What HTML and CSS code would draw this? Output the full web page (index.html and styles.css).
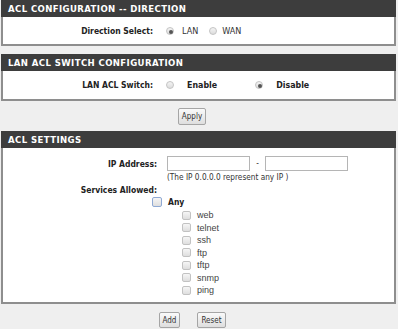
FILE: index.html
```html
<!DOCTYPE html>
<html>

<head>
    <meta charset="UTF-8">
    <title>ACL</title>
    <link rel="stylesheet" href="styles.css">
</head>

<body>
    <div class="panel">
        <div class="panel-head">ACL CONFIGURATION -- DIRECTION</div>
        <div class="panel-body">
            <div class="row row-dir">
                <span class="lbl">Direction Select:</span>
                <div class="val">
                    <input type="radio" name="dir" class="radio" checked><span class="opt">LAN</span>
                    <input type="radio" name="dir" class="radio radio-wan"><span class="opt">WAN</span>
                </div>
            </div>
        </div>
    </div>

    <div class="panel panel-nogap">
        <div class="panel-head">LAN ACL SWITCH CONFIGURATION</div>
        <div class="panel-body">
            <div class="row row-switch">
                <span class="lbl">LAN ACL Switch:</span>
                <div class="val">
                    <input type="radio" name="sw" class="radio"><span class="opt opt-b">Enable</span>
                    <input type="radio" name="sw" class="radio radio-dis" checked><span class="opt opt-b">Disable</span>
                </div>
            </div>
        </div>
    </div>

    <div class="btn-row btn-row-apply">
        <button class="btn">Apply</button>
    </div>

    <div class="panel panel-nogap">
        <div class="panel-head">ACL SETTINGS</div>
        <div class="panel-body panel-settings">
            <div class="row row-ip">
                <span class="lbl">IP Address:</span>
                <div class="val">
                    <input type="text" class="ip"><span class="dash">-</span><input type="text" class="ip">
                </div>
            </div>
            <div class="hint">(The IP 0.0.0.0 represent any IP )</div>
            <div class="row row-svc">
                <span class="lbl">Services Allowed:</span>
            </div>
            <div class="any">
                <input type="checkbox" class="chk chk-any"><span class="any-txt">Any</span>
            </div>
            <ul class="svc-list">
                <li><input type="checkbox" class="chk">web</li>
                <li><input type="checkbox" class="chk">telnet</li>
                <li><input type="checkbox" class="chk">ssh</li>
                <li><input type="checkbox" class="chk">ftp</li>
                <li><input type="checkbox" class="chk">tftp</li>
                <li><input type="checkbox" class="chk">snmp</li>
                <li><input type="checkbox" class="chk">ping</li>
            </ul>
        </div>
    </div>

    <div class="btn-row btn-row-add">
        <button class="btn btn-add">Add</button>
        <button class="btn btn-reset">Reset</button>
    </div>
</body>

</html>
```

FILE: styles.css
```css
body,
ul,
li,
button,
input {
    margin: 0;
    padding: 0;
}

ul {
    list-style: none;
}

body {
    background: #efefef;
    font-family: "DejaVu Sans Condensed", "DejaVu Sans", Verdana, sans-serif;
    font-size: 8px;
    color: #222;
}

.panel {
    margin: 0 2px 8px 1px;
}

.panel-nogap {
    margin-bottom: 0;
}

.panel-head {
    height: 17px;
    line-height: 17px;
    padding-left: 7px;
    background: #3d3d3d;
    color: #fff;
    font-weight: bold;
    font-size: 9.5px;
    letter-spacing: 0.4px;
}

.panel-body {
    background: #fff;
    border: 2px solid #8e8e8e;
    border-top: none;
}

.row {
    display: grid;
    grid-template-columns: 150px 1fr;
    column-gap: 13px;
    align-items: center;
}

.row-dir {
    height: 27px;
}

.row-switch {
    height: 28px;
}

.lbl {
    text-align: right;
    font-weight: bold;
    font-size: 8.5px;
}

.val {
    display: flex;
    align-items: center;
}

.radio {
    appearance: none;
    -webkit-appearance: none;
    width: 8px;
    height: 8px;
    border-radius: 50%;
    border: 1px solid #c4c4c4;
    background: linear-gradient(#f4f4f4, #dcdcdc);
    margin-right: 8px;
    position: relative;
}

.radio:checked::after {
    content: "";
    position: absolute;
    left: 2px;
    top: 2px;
    width: 4px;
    height: 4px;
    border-radius: 50%;
    background: #555;
}

.opt {
    font-size: 9px;
    color: #333;
}

.opt-b {
    font-weight: bold;
    font-size: 8.8px;
    color: #222;
}

.radio-wan {
    margin-left: 11px;
    margin-right: 5px;
}

.radio-dis {
    margin-left: 38px;
    margin-right: 13px;
}

.row-switch .radio:first-child {
    margin-right: 13px;
}

.btn-row {
    display: flex;
    justify-content: center;
    padding-right: 14px;
}

.btn-row-apply {
    height: 30px;
    align-items: center;
}

.btn-row-add {
    padding-top: 8px;
    gap: 17px;
}

.btn {
    height: 17px;
    padding: 0 3px;
    font-family: "DejaVu Sans Condensed", "DejaVu Sans", sans-serif;
    font-size: 8px;
    color: #333;
    background: linear-gradient(#fafafa, #dedede);
    border: 1px solid #a5a5a5;
    border-radius: 2px;
}

.btn-add,
.btn-reset {
    height: 16px;
}

.panel-settings {
    padding: 8px 0 6px;
}

.row-ip,
.row-svc {
    grid-template-columns: 154px 1fr;
    column-gap: 10px;
}

.ip {
    width: 83px;
    height: 15px;
    box-sizing: border-box;
    border: 1px solid #b5b5b5;
    background: #fff;
}

.dash {
    width: 15px;
    text-align: center;
}

.hint {
    margin-left: 164px;
    height: 13px;
    line-height: 13px;
    font-size: 8.2px;
    color: #333;
}

.row-svc {
    height: 12px;
}

.any {
    display: flex;
    align-items: center;
    height: 12.75px;
    padding-left: 149px;
}

.chk {
    appearance: none;
    -webkit-appearance: none;
    width: 9px;
    height: 9px;
    box-sizing: border-box;
    border: 1px solid #c2c2c2;
    border-radius: 2px;
    background: linear-gradient(#f6f6f6, #dedede);
    margin-right: 6px;
}

.chk-any {
    width: 10px;
    height: 10px;
    border-color: #8fa9d4;
    margin-right: 6px;
}

.any-txt {
    font-weight: bold;
    font-size: 8.5px;
}

.svc-list {
    padding-left: 179px;
}

.svc-list li {
    display: flex;
    align-items: center;
    height: 12.5px;
    font-family: "Liberation Sans", Arial, sans-serif;
    font-size: 9px;
    color: #444;
}
```
